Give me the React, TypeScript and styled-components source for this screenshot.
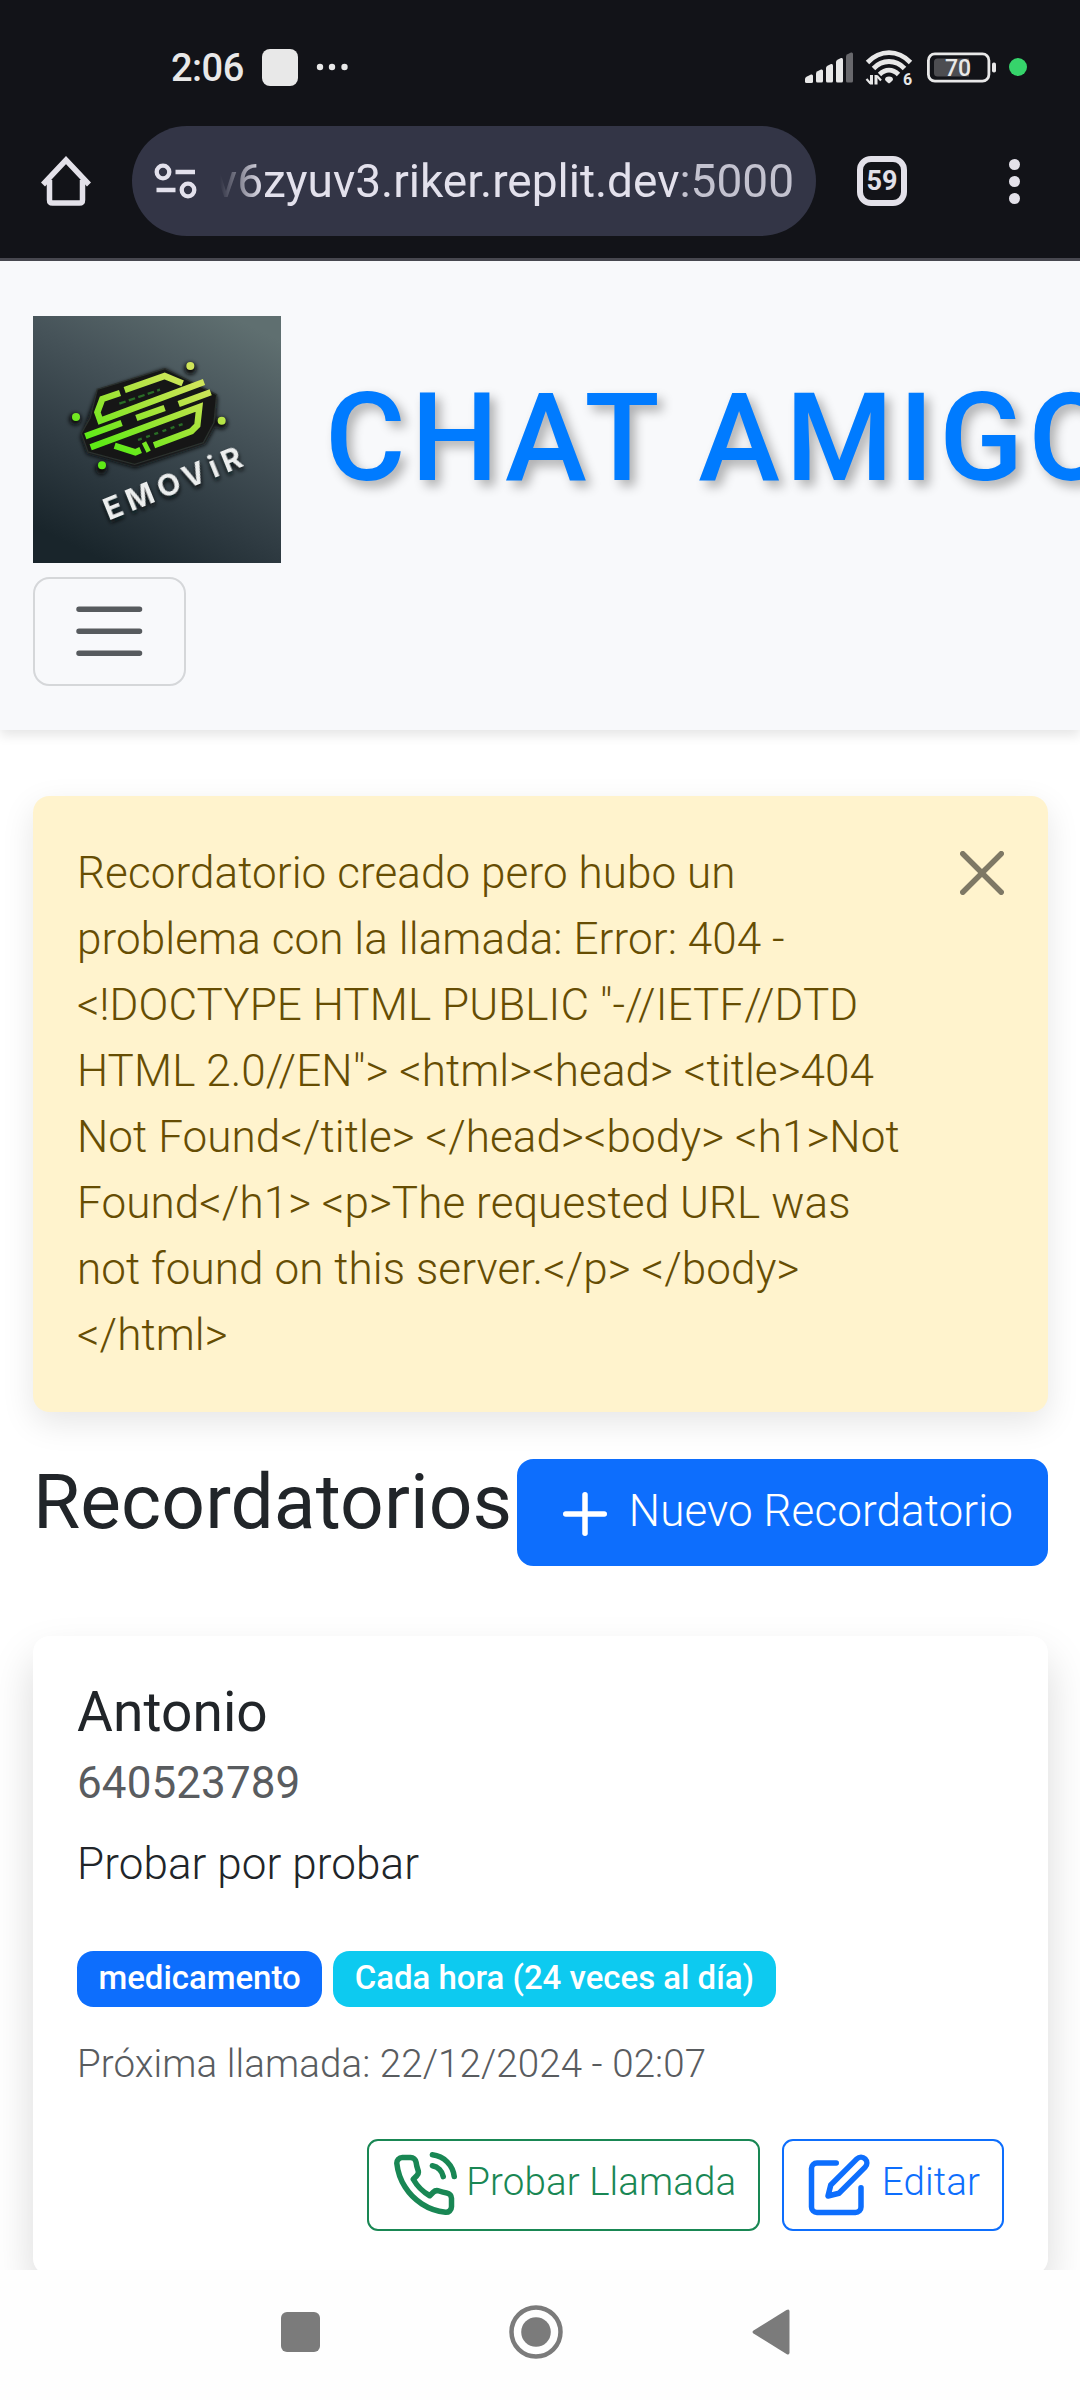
import React from "react";
import styled, { createGlobalStyle } from "styled-components";
import { FiEdit, FiPhoneCall, FiPlus } from "react-icons/fi";

const GlobalStyle = createGlobalStyle`
  * { box-sizing: border-box; }
  body {
    margin: 0;
    overflow: hidden;
    background: #fff;
    font-family: Roboto, "Liberation Sans", sans-serif;
    font-size: 44px;
    font-weight: 300;
    line-height: 1.5;
    color: #212529;
  }
  h1, h2, h3, p { margin: 0; }
  button { font: inherit; cursor: pointer; }
`;

const Screen = styled.div`
  width: 1080px;
  height: 2400px;
  display: flex;
  flex-direction: column;
  overflow: hidden;
`;

/* Device chrome */

const Chrome = styled.header`
  flex: none;
  height: 261px;
  background: #121318;
  border-bottom: 3px solid #47474f;
`;

const StatusBar = styled.div`
  height: 126px;
  padding: 8px 53px 0 171px;
  display: flex;
  align-items: center;
  justify-content: space-between;
`;

const StatusGroup = styled.div<{ $gap: number }>`
  display: flex;
  align-items: center;
  gap: ${(p) => p.$gap}px;
  svg { overflow: visible; }
`;

const Clock = styled.span`
  font-size: 38px;
  font-weight: 500;
  line-height: 44px;
  padding-top: 1px;
  color: #e8e8e8;
  letter-spacing: -0.5px;
`;

const AppChip = styled.span`
  width: 36px;
  height: 37px;
  border-radius: 8px;
  background: #e8e8e8;
`;

const PrivacyDot = styled.span`
  width: 18px;
  height: 18px;
  border-radius: 50%;
  background: #36d46b;
`;

const Toolbar = styled.div`
  height: 132px;
  padding: 0 60px 22px 41px;
  display: flex;
  align-items: center;
`;

const AddressBar = styled.div`
  width: 684px;
  height: 110px;
  margin: 0 41px;
  padding: 0 22px;
  border-radius: 55px;
  background: #333546;
  display: flex;
  align-items: center;
  gap: 23px;
  svg { flex: none; }
`;

const Address = styled.div`
  flex: 1;
  min-width: 0;
  display: flex;
  justify-content: flex-end;
  white-space: nowrap;
  font-size: 46px;
  font-weight: 400;
  line-height: 60px;
  color: #e3e1ec;
  mask-image: linear-gradient(to right, transparent 0, #000 42px);
`;

const Port = styled.span`
  color: #c3c2cf;
`;

const TabCounter = styled.div`
  width: 50px;
  height: 50px;
  border: 6px solid #e3e1e9;
  border-radius: 14px;
  display: flex;
  align-items: center;
  justify-content: center;
  font-size: 27px;
  font-weight: 700;
  line-height: 1;
  color: #e3e1e9;
`;

const MenuDots = styled.div`
  margin-left: auto;
  display: flex;
  flex-direction: column;
  gap: 6px;
  span {
    width: 11px;
    height: 11px;
    border-radius: 50%;
    background: #e3e1e9;
  }
`;

/* Web page */

const Page = styled.div`
  flex: none;
  height: 2009px;
  overflow: hidden;
  background: #fff;
`;

const Navbar = styled.nav`
  height: 469px;
  padding: 55px 32px 0 33px;
  background: #f8f9fb;
  box-shadow: 0 5.5px 11px rgba(0, 0, 0, 0.1);
`;

const Brand = styled.div`
  display: flex;
  align-items: center;
  gap: 44px;
  white-space: nowrap;
`;

const LogoArt = styled.svg`
  flex: none;
  display: block;
  width: 248px;
  height: 247px;
`;

const BrandName = styled.span`
  font-size: 123.2px;
  font-weight: 500;
  line-height: 1.5;
  letter-spacing: 5.5px;
  color: #007bff;
  text-shadow: 5.5px 5.5px 11px rgba(0, 0, 0, 0.3);
  padding-bottom: 2px;
`;

const Toggler = styled.button`
  display: block;
  width: 153px;
  height: 109px;
  margin-top: 14px;
  padding: 11px 33px;
  border: 2px solid rgba(33, 37, 41, 0.16);
  border-radius: 16.5px;
  background: transparent;
  svg { display: block; width: 82.5px; height: 82.5px; }
`;

const Content = styled.main`
  padding: 66px 32px 0 33px;
  letter-spacing: 0.09px;
`;

const Alert = styled.div`
  height: 616px;
  margin-bottom: 44px;
  padding: 44px;
  display: flex;
  align-items: flex-start;
  gap: 44px;
  border-radius: 16.5px;
  background: #fff3cd;
  color: #664d03;
  box-shadow: 0 11px 33px rgba(0, 0, 0, 0.1);
`;

const Message = styled.p`
  flex: 1;
`;

const CloseButton = styled.button`
  flex: none;
  width: 44px;
  height: 44px;
  margin-top: 11px;
  padding: 0;
  border: 0;
  background: transparent;
  opacity: 0.5;
  svg { display: block; width: 44px; height: 44px; }
`;

const TitleRow = styled.div`
  height: 114px;
  margin-bottom: 66px;
  display: flex;
  align-items: center;
  justify-content: space-between;
`;

const Title = styled.h1`
  margin-bottom: 22px;
  font-size: 76.7px;
  font-weight: 400;
  line-height: 1.2;
`;

const PrimaryButton = styled.button`
  flex: none;
  height: 107px;
  margin-bottom: 1px;
  padding: 16.5px 33px;
  border: 2px solid #0d6efd;
  border-radius: 16.5px;
  background: #0d6efd;
  color: #fff;
  line-height: 66px;
  white-space: nowrap;
  letter-spacing: 0.1px;
  svg { width: 66px; height: 66px; vertical-align: middle; }
`;

const Card = styled.article`
  height: 639px;
  padding: 43px 44px 44px;
  border-radius: 16.5px;
  background: #fff;
  box-shadow: 0 22px 44px rgba(0, 0, 0, 0.15);
`;

const CardTitle = styled.h2`
  font-size: 55px;
  font-weight: 400;
  line-height: 66px;
`;

const CardSubtitle = styled.h3`
  margin: 12px 0 21px;
  font-size: 44px;
  font-weight: 400;
  line-height: 52.8px;
  color: #595c5f;
`;

const Badges = styled.div`
  margin-top: 54px;
  display: flex;
  gap: 11px;
`;

const Badge = styled.span<{ $color: string }>`
  height: 56px;
  padding: 10.5px 21.5px 12.5px;
  border-radius: 16.5px;
  background: ${(p) => p.$color};
  color: #fff;
  font-size: 33px;
  font-weight: 500;
  line-height: 33px;
  letter-spacing: -0.03px;
  white-space: nowrap;
`;

const NextCall = styled.p`
  margin-top: 28px;
  font-size: 38.5px;
  line-height: 57.75px;
  color: #595c5f;
`;

const Actions = styled.div`
  margin-top: 46px;
  display: flex;
  justify-content: flex-end;
  gap: 22px;
`;

const OutlineButton = styled.button<{ $color: string }>`
  height: 92px;
  padding: 11px 22px;
  border: 2px solid ${(p) => p.$color};
  border-radius: 11px;
  background: transparent;
  color: ${(p) => p.$color};
  font-size: 38.5px;
  line-height: 57.75px;
  letter-spacing: 0.1px;
  white-space: nowrap;
  svg { width: 66px; height: 66px; vertical-align: middle; }
`;

const SystemNav = styled.footer`
  flex: none;
  height: 130px;
  padding: 0 290px 6px 281px;
  display: flex;
  align-items: center;
  justify-content: space-between;
  background: #fefefe;
`;

function SignalIcon() {
  return (
    <svg width="48" height="32" viewBox="805 51 48 32" fill="#e8e8e8">
      <path d="M805 79q0-1.500 1.500-2.300l4.500-2.200q2-.5 2 1.500v5.500q0 1.500-1.500 1.500h-5q-1.500 0-1.500-1.500z" />
      <path d="M816 73.500q0-1.500 1.500-2.300l3.500-1.700q2-.5 2 1.500v10q0 1.500-1.500 1.500h-4q-1.500 0-1.500-1.500z" />
      <path d="M826 68q0-1.500 1.500-2.300l3.500-1.700q2-.5 2 1.500v15.500q0 1.500-1.500 1.500h-4q-1.500 0-1.500-1.500z" />
      <path d="M836 62q0-1.500 1.500-2.300l3.500-1.700q2-.5 2 1.500v21.500q0 1.500-1.500 1.500h-4q-1.500 0-1.500-1.500z" />
      <path d="M846 56.500q0-1.500 1.500-2.300l3.500-1.700q2-.5 2 1.500v27q0 1.500-1.500 1.500h-4q-1.500 0-1.500-1.500z" fill="#68686c" />
    </svg>
  );
}

function WifiIcon() {
  return (
    <svg width="50" height="38" viewBox="865 48.500 50 38">
      <g fill="none" stroke="#e8e8e8" strokeWidth="4.800">
        <path d="M867.500 63Q877 53.200 889 53.200T910.500 63" />
        <path d="M873.500 69Q880 62 889 62T904.500 69" />
        <path d="M879.500 75Q884 70.600 889 70.600T898.500 75" />
      </g>
      <path d="M885 80q0-3 4-3t4 3q0 1-4 4q-4-3-4-4z" fill="#e8e8e8" />
      <path d="M871.500 75.500v9.500M876 85v-9.500" stroke="#e8e8e8" strokeWidth="3" fill="none" />
      <path d="M866.500 79.500l4 4.500M881 81l-4-4.500" stroke="#e8e8e8" strokeWidth="2.200" fill="none" />
      <text x="903" y="85" fontFamily="Roboto, sans-serif" fontWeight="700" fontSize="16" fill="#e8e8e8">6</text>
    </svg>
  );
}

function BatteryIcon() {
  return (
    <svg width="70" height="31" viewBox="927 51.500 70 31">
      <rect x="928.400" y="53.400" width="60.500" height="27.200" rx="6.500" fill="none" stroke="#e8e8e8" strokeWidth="2.800" />
      <path d="M937.500 58H969v18h-31.500q-3.500 0-3.500-3.500v-11q0-3.500 3.500-3.500z" fill="#4d4d51" />
      <rect x="992" y="62" width="4" height="10" rx="1.800" fill="#e8e8e8" />
      <text x="958" y="75.500" textAnchor="middle" fontFamily="Roboto, sans-serif" fontWeight="500" fontSize="23" fill="#e8e8e8">70</text>
    </svg>
  );
}

function EmovirLogo() {
  return (
    <LogoArt viewBox="-81 -102 744 741" role="img" aria-label="EMOViR">
      <defs>
        <linearGradient id="slate" x1="0.8" y1="0" x2="0.3" y2="1">
          <stop offset="0" stopColor="#5f6f70" />
          <stop offset="0.35" stopColor="#465359" />
          <stop offset="0.7" stopColor="#2e3a41" />
          <stop offset="1" stopColor="#19252b" />
        </linearGradient>
        <linearGradient id="lime" gradientUnits="userSpaceOnUse" x1="330" y1="60" x2="210" y2="320">
          <stop offset="0" stopColor="#cfe55a" />
          <stop offset="0.5" stopColor="#a0e436" />
          <stop offset="1" stopColor="#5fea18" />
        </linearGradient>
        <filter id="soft" x="-20%" y="-20%" width="140%" height="140%">
          <feGaussianBlur stdDeviation="6" />
        </filter>
        <filter id="smooth" x="-5%" y="-5%" width="110%" height="110%">
          <feGaussianBlur stdDeviation="2" />
        </filter>
      </defs>
      <rect x="-81" y="-102" width="744" height="741" fill="url(#slate)" />
      <g filter="url(#soft)" fill="#080c0e">
        <path d="M112 124L315 56L472 140L466 230L436 284L226 354L80 312L62 262Z" />
        <circle cx="391" cy="56" r="18" />
        <circle cx="46" cy="208" r="18" />
        <circle cx="484" cy="220" r="18" />
        <circle cx="124" cy="356" r="18" />
      </g>
      <g filter="url(#smooth)">
        <path d="M112 118L315 56L470 134L462 218L430 278L224 343L84 306L64 250L90 205Z" fill="#141817" stroke="#2c302e" strokeWidth="4" />
        <g fill="none" stroke="url(#lime)" strokeWidth="19">
          <path d="M180 129L127 147L112 187L121 212L432 96" />
          <path d="M194 120L314 78L368 100" />
          <path d="M356 162L452 127" />
          <path d="M229 204L314 174" />
          <path d="M76 259L185 219" />
          <path d="M92 292L418 171L412 226L394 244L282 286" />
          <path d="M164 287L226 307L242 300" />
          <path d="M252 277L266 305" strokeWidth="14" />
        </g>
        <g fill="none" stroke="#2a6d26" strokeWidth="7">
          <path d="M178 161L300 119" strokeDasharray="20 10" />
          <path d="M234 270L368 222" strokeDasharray="12 14" />
        </g>
        <g fill="url(#lime)">
          <circle cx="391" cy="48" r="12" />
          <circle cx="48" cy="201" r="12" />
          <circle cx="485" cy="212" r="12" />
          <circle cx="126" cy="346" r="12" />
        </g>
      </g>
      <g transform="translate(146 512) rotate(-22)" fontFamily="Inter, sans-serif" fontWeight="700" fontSize="90">
        <text x="-2" y="9" textLength="440" lengthAdjust="spacing" fill="#080c0e" filter="url(#soft)" aria-hidden="true">EMOViR</text>
        <text textLength="440" lengthAdjust="spacing" fill="#eceeee" filter="url(#smooth)">EMOViR</text>
      </g>
    </LogoArt>
  );
}

export default function App() {
  return (
    <Screen>
      <GlobalStyle />
      <Chrome>
        <StatusBar>
          <StatusGroup $gap={18}>
            <Clock>2:06</Clock>
            <AppChip />
            <svg width="32" height="8" viewBox="0 0 32 8" fill="#e8e8e8">
              <circle cx="4" cy="4" r="3.200" />
              <circle cx="16" cy="4" r="3.200" />
              <circle cx="28.500" cy="4" r="3.200" />
            </svg>
          </StatusGroup>
          <StatusGroup $gap={12}>
            <SignalIcon />
            <WifiIcon />
            <BatteryIcon />
            <PrivacyDot />
          </StatusGroup>
        </StatusBar>
        <Toolbar>
          <svg width="50" height="50" viewBox="41 156 50 50" fill="none" stroke="#e3e1e9" strokeWidth="5.500" strokeLinejoin="round">
            <path d="M43 184.500L66 160L89 184.500" strokeLinejoin="miter" />
            <path d="M49.500 180v20q0 3 3 3h27q3 0 3-3v-20" />
          </svg>
          <AddressBar>
            <svg width="43" height="36" viewBox="154.500 163 43 36" fill="none" stroke="#e3e1ec" strokeWidth="4.300">
              <circle cx="163.500" cy="172" r="6.300" />
              <circle cx="188.500" cy="190" r="6.300" />
              <path d="M176 172h19.500M157 190h19" />
            </svg>
            <Address>
              <span>v6zyuv3.riker.replit.dev<Port>:5000</Port></span>
            </Address>
          </AddressBar>
          <TabCounter>59</TabCounter>
          <MenuDots>
            <span />
            <span />
            <span />
          </MenuDots>
        </Toolbar>
      </Chrome>

      <Page>
        <Navbar>
          <Brand>
            <EmovirLogo />
            <BrandName>CHAT AMIGO</BrandName>
          </Brand>
          <Toggler aria-label="Menú">
            <svg viewBox="0 0 30 30" stroke="rgba(33,37,41,.75)" strokeLinecap="round" strokeWidth="2">
              <path d="M4 7h22M4 15h22M4 23h22" />
            </svg>
          </Toggler>
        </Navbar>

        <Content>
          <Alert role="alert">
            <Message>
              {
                'Recordatorio creado pero hubo un problema con la llamada: Error: 404 - <!DOCTYPE HTML PUBLIC "-//IETF//DTD HTML 2.0//EN"> <html><head> <title>404 Not Found</title> </head><body> <h1>Not Found</h1> <p>The requested URL was not found on this server.</p> </body></html>'
              }
            </Message>
            <CloseButton aria-label="Cerrar">
              <svg viewBox="0 0 16 16" fill="#000">
                <path d="M.293.293a1 1 0 0 1 1.414 0L8 6.586 14.293.293a1 1 0 1 1 1.414 1.414L9.414 8l6.293 6.293a1 1 0 0 1-1.414 1.414L8 9.414l-6.293 6.293a1 1 0 0 1-1.414-1.414L6.586 8 .293 1.707a1 1 0 0 1 0-1.414z" />
              </svg>
            </CloseButton>
          </Alert>

          <TitleRow>
            <Title>Recordatorios</Title>
            <PrimaryButton>
              <FiPlus /> Nuevo Recordatorio
            </PrimaryButton>
          </TitleRow>

          <Card>
            <CardTitle>Antonio</CardTitle>
            <CardSubtitle>640523789</CardSubtitle>
            <p>Probar por probar</p>
            <Badges>
              <Badge $color="#0d6efd">medicamento</Badge>
              <Badge $color="#0dcaf0">Cada hora (24 veces al día)</Badge>
            </Badges>
            <NextCall>Próxima llamada: 22/12/2024 - 02:07</NextCall>
            <Actions>
              <OutlineButton $color="#198754">
                <FiPhoneCall /> Probar Llamada
              </OutlineButton>
              <OutlineButton $color="#0d6efd">
                <FiEdit /> Editar
              </OutlineButton>
            </Actions>
          </Card>
        </Content>
      </Page>

      <SystemNav>
        <svg width="39" height="40" viewBox="0 0 39 40">
          <rect width="39" height="40" rx="6" fill="#7b7b7b" />
        </svg>
        <svg width="54" height="54" viewBox="0 0 54 54">
          <circle cx="27" cy="27" r="24.500" fill="none" stroke="#7b7b7b" strokeWidth="4.500" />
          <circle cx="27" cy="27" r="14.800" fill="#7b7b7b" />
        </svg>
        <svg width="38" height="46" viewBox="0 0 38 46">
          <path d="M1.500 21.500L34.500 1q3-1.500 3 1.500v41q0 3-3 1.500L1.500 24.500q-2-1.500 0-3z" fill="#7b7b7b" />
        </svg>
      </SystemNav>
    </Screen>
  );
}
